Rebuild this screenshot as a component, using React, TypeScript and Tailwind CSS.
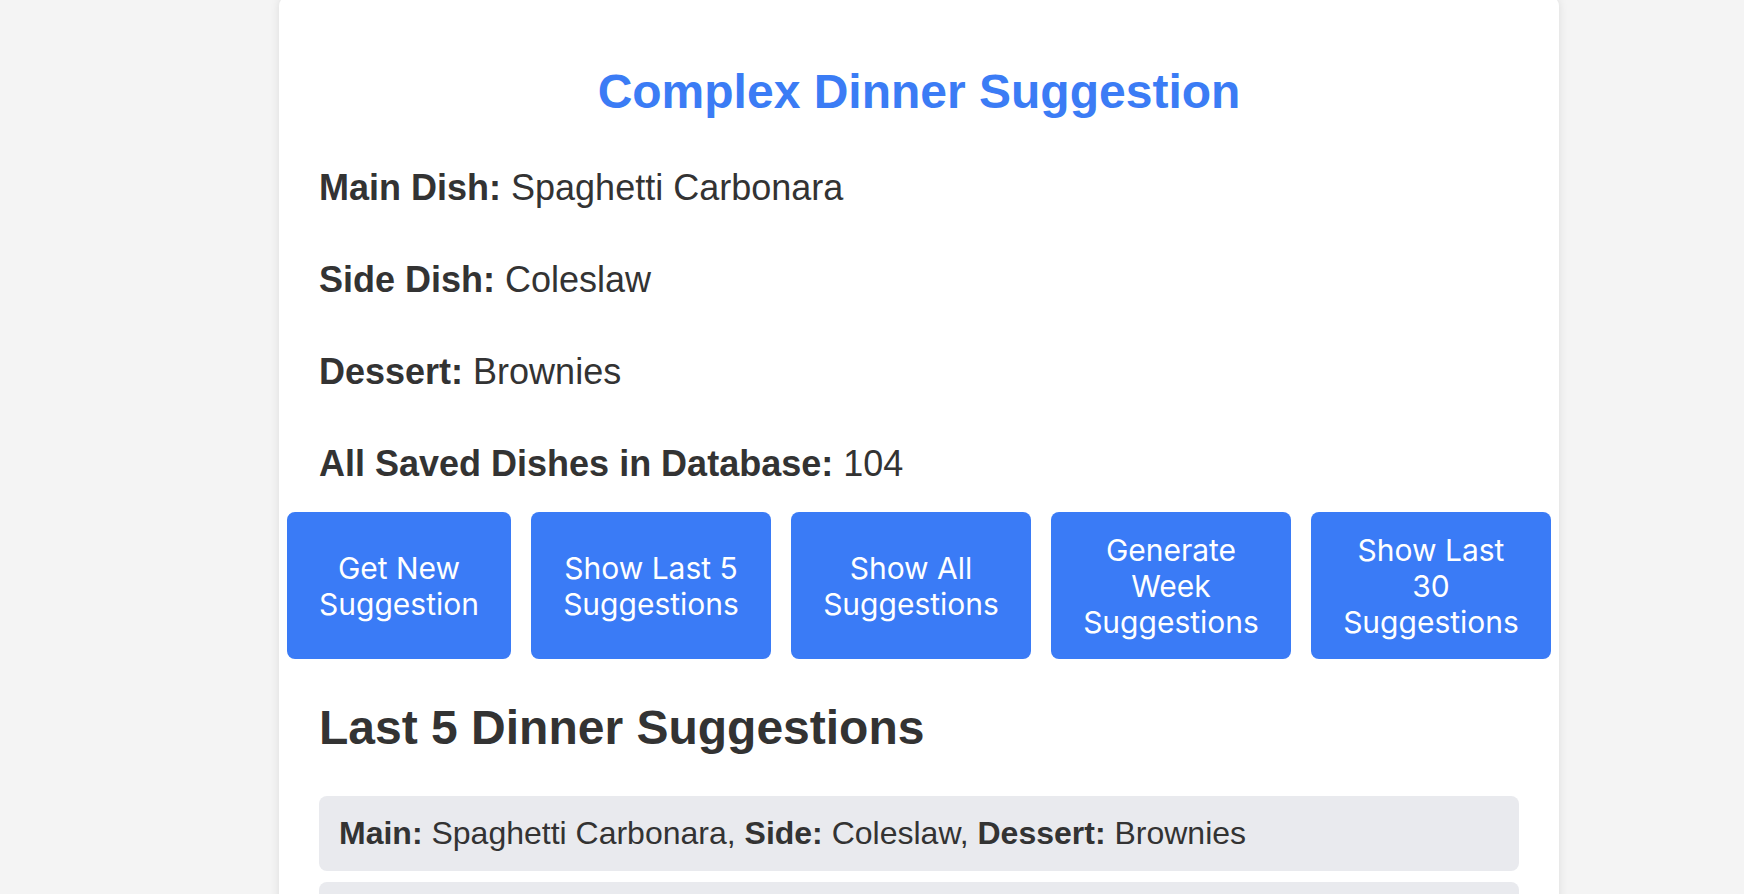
const rows = [
  { label: 'Main Dish:', value: 'Spaghetti Carbonara' },
  { label: 'Side Dish:', value: 'Coleslaw' },
  { label: 'Dessert:', value: 'Brownies' },
  { label: 'All Saved Dishes in Database:', value: '104' },
];

const buttons = [
  { lines: ['Get New', 'Suggestion'], w: 'w-[224px]' },
  { lines: ['Show Last 5', 'Suggestions'], w: 'w-[240px]' },
  { lines: ['Show All', 'Suggestions'], w: 'w-[240px]' },
  { lines: ['Generate', 'Week', 'Suggestions'], w: 'w-[240px]' },
  { lines: ['Show Last', '30', 'Suggestions'], w: 'w-[240px]' },
];

const history = [
  { main: 'Spaghetti Carbonara', side: 'Coleslaw', dessert: 'Brownies' },
  { main: 'Grilled Salmon', side: 'Caesar Salad', dessert: 'Cheesecake' },
];

export default function App() {
  return (
    <div className="min-h-screen bg-[#f4f4f4] overflow-hidden" style={{ fontFamily: '"Liberation Sans", Arial, sans-serif' }}>
      <div className="ml-[279px] w-[1280px] -mt-[4px] bg-white rounded-[10px] shadow-[0_0_10px_rgba(0,0,0,0.1)] px-[40px] pt-[68px] pb-10 text-[#333]">
        <h1 className="text-center text-[48px] leading-[56px] font-bold text-[#3b7cf5]">Complex Dinner Suggestion</h1>

        <div className="flex flex-col gap-[36px] mt-[40px]">
          {rows.map((r) => (
            <p key={r.label} className="text-[36px] leading-[56px]">
              <strong className="font-bold">{r.label}</strong> {r.value}
            </p>
          ))}
        </div>

        <div className="flex gap-[20px] -mx-[32px] mt-[20px]">
          {buttons.map((b) => (
            <button
              key={b.lines.join(' ')}
              className={`${b.w} h-[147px] shrink-0 bg-[#3a7bf6] text-white rounded-[8px] flex flex-col items-center justify-center text-[30px] leading-[36px] whitespace-nowrap`}
              style={{ fontFamily: 'Inter, "Open Sans", sans-serif' }}
            >
              {b.lines.map((l) => (
                <span key={l}>{l}</span>
              ))}
            </button>
          ))}
        </div>

        <h2 className="text-[48px] leading-[56px] font-bold mt-[41px]">Last 5 Dinner Suggestions</h2>

        <ul className="flex flex-col gap-[11px] mt-[40px]">
          {history.map((h, i) => (
            <li key={i} className="bg-[#e9eaee] rounded-[8px] px-[20px] py-[19px] text-[32px] leading-[37px]">
              <strong>Main:</strong> {h.main}, <strong>Side:</strong> {h.side}, <strong>Dessert:</strong> {h.dessert}
            </li>
          ))}
        </ul>
      </div>
    </div>
  );
}
